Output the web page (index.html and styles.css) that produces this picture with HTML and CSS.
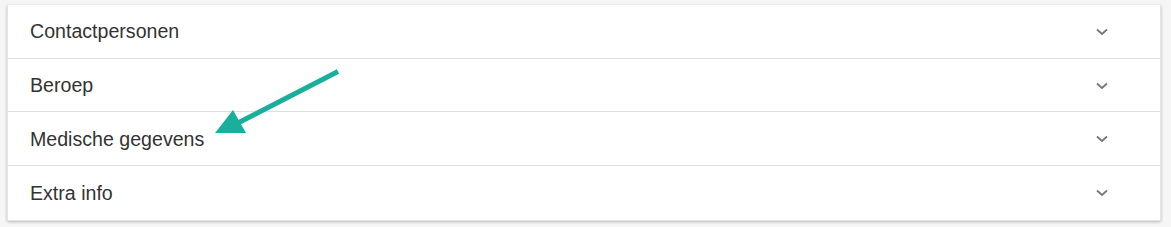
FILE: index.html
```html
<!DOCTYPE html>
<html>
<head>
<meta charset="utf-8">
<link rel="stylesheet" href="styles.css">
</head>
<body>
<div class="page">
  <div class="accordion">
    <div class="row"><span class="label">Contactpersonen</span><svg class="chev" viewBox="0 0 12 8" width="12" height="8"><path d="M1 1.5 L6 6 L11 1.5" fill="none" stroke="#777" stroke-width="1.8"/></svg></div>
    <div class="row"><span class="label">Beroep</span><svg class="chev" viewBox="0 0 12 8" width="12" height="8"><path d="M1 1.5 L6 6 L11 1.5" fill="none" stroke="#777" stroke-width="1.8"/></svg></div>
    <div class="row"><span class="label">Medische gegevens</span><svg class="chev" viewBox="0 0 12 8" width="12" height="8"><path d="M1 1.5 L6 6 L11 1.5" fill="none" stroke="#777" stroke-width="1.8"/></svg></div>
    <div class="row"><span class="label">Extra info</span><svg class="chev" viewBox="0 0 12 8" width="12" height="8"><path d="M1 1.5 L6 6 L11 1.5" fill="none" stroke="#777" stroke-width="1.8"/></svg></div>
  </div>
  <svg class="arrow" viewBox="0 0 1171 227" width="1171" height="227">
    <line x1="338" y1="71.5" x2="236" y2="124" stroke="#1aaf9d" stroke-width="5" stroke-linecap="butt"/>
    <polygon points="215,133 233,110 246,133" fill="#1aaf9d"/>
  </svg>
</div>
</body>
</html>
```
FILE: styles.css
```css
html, body {
  margin: 0;
  padding: 0;
  background: #f6f6f6;
}
.page {
  position: relative;
  width: 1171px;
  height: 227px;
  padding: 5px 10px 0 7px;
  box-sizing: border-box;
}
.accordion {
  background: #fff;
  box-shadow: 0 1px 3px rgba(0,0,0,0.25);
  border: 1px solid #e4e4e4;
  border-top: none;
  box-sizing: border-box;
  width: 1154px;
}
.row {
  height: 53.7px;
  display: flex;
  align-items: center;
  justify-content: space-between;
  padding: 1px 52px 0 22px;
  box-sizing: border-box;
  border-bottom: 1px solid #dedede;
  font-family: "Liberation Sans", Arial, sans-serif;
  font-size: 19.6px;
  color: #333;
}
.row:last-child {
  border-bottom: none;
}
.chev {
  display: block;
}
.arrow {
  position: absolute;
  left: 0;
  top: 0;
  pointer-events: none;
}
```
